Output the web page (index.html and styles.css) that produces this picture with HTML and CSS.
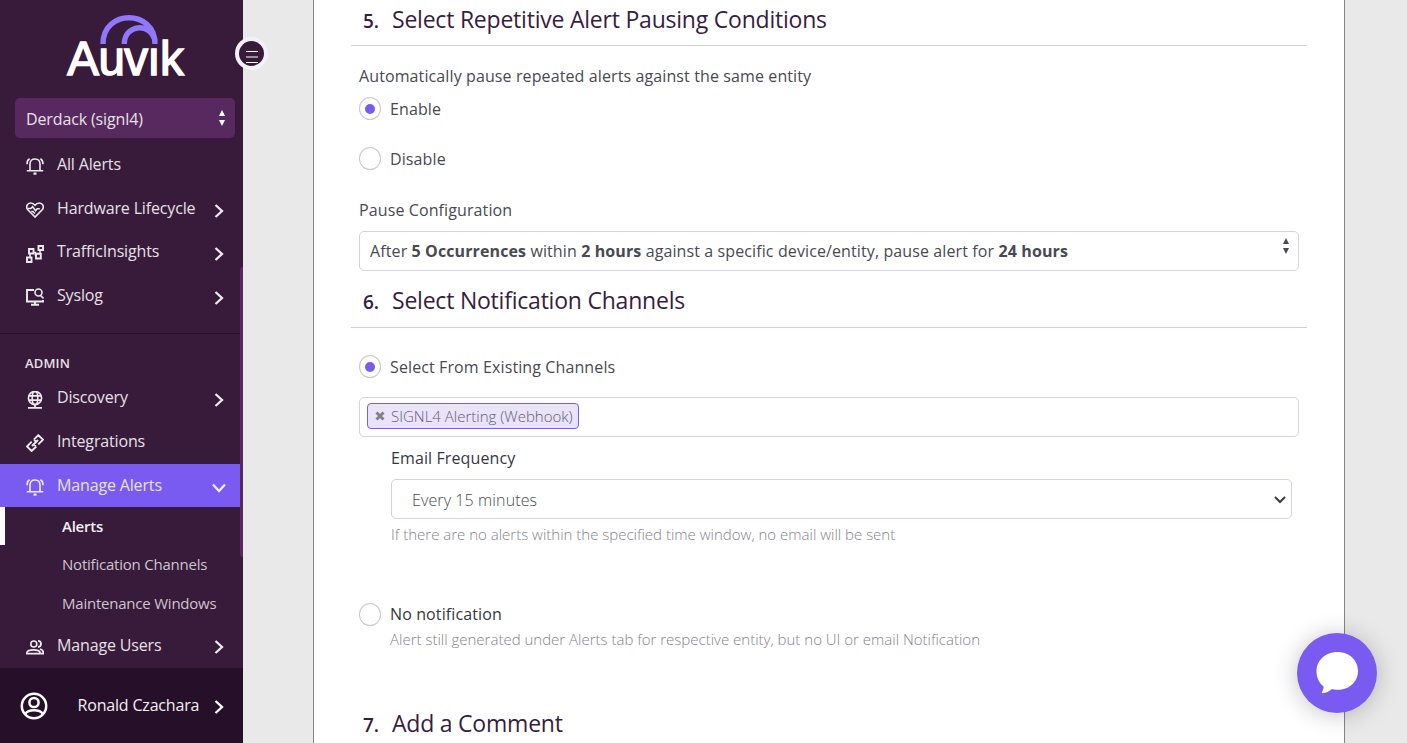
FILE: index.html
```
<!DOCTYPE html>
<html lang="en">
<head>
<meta charset="utf-8">
<title>Auvik - Alerts</title>
<link rel="stylesheet" href="styles.css">
</head>
<body>
<svg class="sprite" aria-hidden="true">
  <symbol id="bell" viewBox="0 0 18 18"><path d="M.8 13.700h16.400M4 13.500V7.200C4 3.500 6 2 9 2s5 1.500 5 5.200v6.300" /><path d="M1 7.200C1 4.600 1.500 2.800 3.600 1.700M17 7.200c0-2.600-.5-4.400-2.600-5.500" /><path d="M7.500 16.600h3" stroke-width="2.200"/></symbol>
  <symbol id="heart" viewBox="0 0 18 18"><path d="M9 16 1.600 8.500C-.4 5.700 1.300 2 4.600 2 6.600 2 8 3 9 4.300 10 3 11.400 2 13.400 2c3.300 0 5 3.700 3 6.500z"/><path d="M2 7.500h2.800l1.800-1.800 3 4 1.500-1.900h2.700M5.300 10.500h1.600l2 2"/></symbol>
  <symbol id="nodes" viewBox="0 0 18 18"><path d="M1 12.500h4.500V17H1zM3 4h4.500v4.500H3zM10 8.800h4.800v4.700H10zM12.500 1H17v4h-4.500z" stroke-width="1.900"/><path d="M4 8.500v4M7.500 7.500h2v3.500M14 8.800V5"/></symbol>
  <symbol id="monitor" viewBox="0 0 18 18"><path d="M8 2H1v11.500h16V12M9 13.500V16M5 16.800h8" stroke-width="1.900"/><circle cx="12.500" cy="4.500" r="3.500"/><path d="m14.500 7.500 3 3"/></symbol>
  <symbol id="globe" viewBox="0 0 18 18"><circle cx="9" cy="7" r="6.600"/><ellipse cx="9" cy="7" rx="2.800" ry="6.600"/><path d="M3 4.800h12M3 9.200h12M9 13.500V16M2 16.800h14" stroke-width="1.800"/></symbol>
  <symbol id="link" viewBox="0 0 18 18"><path d="m7.800 5.700 4.500-4.500L17 5.600l-4.700 4.800M10.300 12.500l-4.700 4.500L1 12.500l4.700-4.800M6 12l6-6M8 6l2 1.500M10 12 8 10.500" stroke-width="1.900"/></symbol>
  <symbol id="users" viewBox="0 0 18 18"><circle cx="7.800" cy="5" r="3"/><path d="M1 14.700v-1.500c1-3.200 12-3.200 13 0v1.500zM12 1.800c4 0 4 6 0 6.200M14 10c2 .7 3.200 1.600 3.200 3v1.700H15" stroke-width="1.800"/></symbol>
  <symbol id="chev" viewBox="0 0 12 16"><path d="m2.500 2 6.500 6-6.500 6" stroke-width="2.300"/></symbol>
</svg>
<div class="app">
  <aside class="sidebar">
    <svg class="logo" viewBox="0 0 124 68" role="img" aria-label="Auvik">
      <path d="M39 34C39 -1.100 91 -1.100 91 34" />
      <path d="M60.300 34C60.300 14 87 12 91 31"/>
      <text x="3.300" y="65.200">Auvık</text>
    </svg>
    <div class="tenant"><span>Derdack (signl4)</span><i class="updown"></i></div>
    <nav class="nav">
      <a class="item"><svg class="ic"><use href="#bell"/></svg><span>All Alerts</span></a>
      <a class="item"><svg class="ic"><use href="#heart"/></svg><span>Hardware Lifecycle</span><svg class="chev"><use href="#chev"/></svg></a>
      <a class="item"><svg class="ic"><use href="#nodes"/></svg><span>TrafficInsights</span><svg class="chev"><use href="#chev"/></svg></a>
      <a class="item"><svg class="ic"><use href="#monitor"/></svg><span>Syslog</span><svg class="chev"><use href="#chev"/></svg></a>
    </nav>
    <div class="group">ADMIN</div>
    <nav class="nav">
      <a class="item"><svg class="ic"><use href="#globe"/></svg><span>Discovery</span><svg class="chev"><use href="#chev"/></svg></a>
      <a class="item"><svg class="ic"><use href="#link"/></svg><span>Integrations</span></a>
      <a class="item active"><svg class="ic"><use href="#bell"/></svg><span>Manage Alerts</span><svg class="chev down"><use href="#chev"/></svg></a>
      <a class="sub current">Alerts</a>
      <a class="sub">Notification Channels</a>
      <a class="sub">Maintenance Windows</a>
      <a class="item last"><svg class="ic"><use href="#users"/></svg><span>Manage Users</span><svg class="chev"><use href="#chev"/></svg></a>
    </nav>
    <div class="account">
      <svg class="avatar" viewBox="0 0 28 28"><circle cx="14" cy="14" r="12.200"/><circle cx="14" cy="10.500" r="4.600"/><path d="M5 22c3.500-5 14.500-5 18 0"/></svg>
      <span>Ronald Czachara</span><svg class="chev"><use href="#chev"/></svg>
    </div>
    <i class="scroll"></i>
    <button class="toggle" aria-label="Menu"><svg viewBox="0 0 14 14"><path d="M1 1.500h12M1 7h12M1 12.500h12"/></svg></button>
  </aside>
  <main class="card">
    <h2 class="h5"><b>5.</b><span>Select Repetitive Alert Pausing Conditions</span></h2>
    <div class="fields pause">
      <p class="label">Automatically pause repeated alerts against the same entity</p>
      <label class="radio on"><i></i><span>Enable</span></label>
      <label class="radio"><i></i><span>Disable</span></label>
      <p class="label">Pause Configuration</p>
      <div class="box config"><span>After <b>5 Occurrences</b> within <b>2 hours</b> against a specific device/entity, pause alert for <b>24 hours</b></span><i class="updown"></i></div>
    </div>
    <h2 class="h6"><b>6.</b><span>Select Notification Channels</span></h2>
    <div class="fields channels">
      <label class="radio on"><i></i><span>Select From Existing Channels</span></label>
      <div class="box tags"><span class="tag"><svg viewBox="0 0 10 10"><path d="m1.500 1.500 7 7M8.500 1.500l-7 7"/></svg><span>SIGNL4 Alerting (Webhook)</span></span></div>
      <div class="email">
        <p class="label dark">Email Frequency</p>
        <div class="box freq"><span>Every 15 minutes</span><svg viewBox="0 0 12 8"><path d="m1 1 5 5 5-5"/></svg></div>
        <p class="hint h-a">If there are no alerts within the specified time window, no email will be sent</p>
      </div>
      <label class="radio none"><i></i><span class="dark">No notification</span></label>
      <p class="hint h-b">Alert still generated under Alerts tab for respective entity, but no UI or email Notification</p>
    </div>
    <h2 class="h7"><b>7.</b><span>Add a Comment</span></h2>
  </main>
  <button class="chat" aria-label="Chat"><svg viewBox="0 0 44 44"><path d="M22.500 1C34.500 1 43 9.500 43 20c0 11-9 18.800-20.500 18.800-2.500 0-4-.5-6-.5-2.500 2-5 4-9.500 3.900C6.500 40.500 9 38.500 8.600 35.500 4 32 1.500 26.500 1.500 20 1.500 9.500 10.500 1 22.500 1z"/></svg></button>
</div>
</body>
</html>
```
FILE: styles.css
```
* { box-sizing: border-box; }
body { margin: 0; background: #e9e9e9; font-family: "Open Sans", "Noto Sans", sans-serif; font-size: 16px; color: #484a52; overflow: hidden; }
p, h2 { margin: 0; }
button { border: 0; padding: 0; }
.sprite { position: absolute; width: 0; height: 0; }
.app { display: flex; height: 743px; overflow: hidden; }

.sidebar { position: relative; width: 243px; height: 743px; background: #381a3a; color: #e6e1e6; display: flex; flex-direction: column; flex: none; }
.logo { width: 124px; height: 68px; margin: 10px 0 0 64px; flex: none; overflow: visible; }
.logo path { fill: none; stroke: #8f78fb; stroke-width: 5.400; }
.logo text { font: 400 47.500px "Liberation Sans", sans-serif; fill: #fff; stroke: #fff; stroke-width: 1.500; letter-spacing: -.6px; }
.tenant { width: 220px; height: 40px; margin: 20px 0 5px 15px; flex: none; padding: 2px 10px 0 11px; border-radius: 5px; background: #58295f; display: flex; align-items: center; justify-content: space-between; letter-spacing: -0.13px; }
.updown { width: 6px; height: 16px; display: flex; flex-direction: column; justify-content: space-between; }
.updown::before, .updown::after { content: ""; border: 3px solid transparent; border-top: 0; border-bottom: 6px solid currentColor; }
.updown::after { transform: rotate(180deg); }
.tenant .updown { margin-bottom: 3px; color: #fff; }
.nav { display: flex; flex-direction: column; }
.item { width: 240px; height: 43.700px; display: flex; align-items: center; padding: 0 15px 2px 26px; letter-spacing: -0.15px; flex: none; }
.ic { width: 18px; height: 18px; margin: 5px 13px 0 0; flex: none; fill: none; stroke: #eeebee; stroke-width: 1.600; }
.chev { width: 12px; height: 16px; margin: 6px 0 0 auto; fill: none; stroke: #eeebee; flex: none; }
.down { transform: rotate(90deg); }
.active { background: #7a5bf1; height: 43px; padding-bottom: 1px; }
.group { height: 43.600px; width: 240px; margin-top: 15px; border-top: 1px solid #27102a; padding: 20px 0 0 25px; font-size: 13px; line-height: 18px; font-weight: 600; letter-spacing: .15px; flex: none; }
.sub { width: 240px; height: 38.600px; line-height: 39px; padding-left: 62px; font-size: 15px; letter-spacing: -0.22px; flex: none; color: #cdc5ce; }
.current { font-weight: 600; border-left: 5px solid #fff; padding-left: 57px; letter-spacing: -0.25px; color: #f4f1f4; }
.last { padding-top: 2px; padding-bottom: 0; }
.last .chev { margin-top: 4px; }
.account { margin-top: auto; height: 75px; background: #260f28; color: #f2eff2; padding: 0 15px 0 20px; display: flex; align-items: center; width: 243px; flex: none; letter-spacing: -0.18px; }
.account span { margin-bottom: 2px; }
.account .chev { margin: 2px 3px 0 auto; stroke: #fff; }
.avatar { width: 28px; height: 28px; margin-right: 29.500px; fill: none; stroke: #fff; stroke-width: 2.500; }
.scroll { position: absolute; right: 0; top: 267px; width: 3px; height: 290px; background: #58295f; border-radius: 3px 0 0 3px; }
.toggle { position: absolute; left: 235px; top: 37px; width: 33px; height: 33px; border: 4px solid #f1f1f8; border-radius: 50%; background: #381a3a; display: flex; justify-content: center; }
.toggle svg { width: 14px; height: 14px; margin-top: 9px; fill: none; stroke: #fff; stroke-width: 1.200; }

.card { width: 1032px; height: 743px; margin-left: 70px; padding: 0 37px; background: #fff; border: solid #85838d; border-width: 0 1px; display: flex; flex-direction: column; flex: none; letter-spacing: .11px; }
h2 { display: flex; align-items: baseline; padding-left: 12px; border-bottom: 1px solid #d2d0e0; color: #371d3f; font-size: 23px; line-height: 32px; font-weight: 400; letter-spacing: -.22px; flex: none; }
h2 b { font-size: 19px; font-weight: 600; width: 29px; letter-spacing: 0; }
.h5 { height: 46px; padding-top: 3px; }
.h6 { height: 57px; padding-top: 13px; }
.h7 { height: 70px; margin-top: 58px; }
.fields { display: flex; flex-direction: column; padding: 0 8px; }
.label { line-height: 24px; }
.pause .label { margin-top: 18px; }
.radio { display: flex; align-items: center; height: 24px; flex: none; }
.radio i { width: 22px; height: 23px; border: 1px solid #c9c9cd; border-radius: 50%; margin: 0 9px 1px 0; display: flex; align-items: center; justify-content: center; }
.none i { margin-bottom: 0; }
.on i::before { content: ""; width: 10px; height: 10px; border-radius: 50%; background: #7a5bf1; margin-top: 1px; }
.pause .radio { margin: 9px 0 17px; }
.pause .radio + .radio { margin-bottom: 9px; }
.box { width: 940px; height: 40px; border: 1px solid #d4d2e3; border-radius: 5px; display: flex; align-items: center; justify-content: space-between; flex: none; }
.config { margin-top: 9px; padding: 0 9px 0 10px; }
.config .updown { margin-bottom: 10px; }
.config b { font-weight: 700; }
.channels > .radio { margin-top: 27px; }
.tags { margin-top: 18px; padding: 0 0 2px 7px; }
.tag { height: 26px; width: 212px; border: 1px solid #7a5bf1; border-radius: 4px; background: #e9e3fb; display: flex; align-items: center; padding-left: 7px; font-size: 15px; font-weight: 300; color: #62616b; letter-spacing: 0; }
.tag svg { width: 10px; height: 10px; margin-right: 6px; stroke: #82808a; stroke-width: 3; }
.email { margin: 9px 0 0 32px; }
.dark { color: #35373f; }
.freq { width: 901px; margin-top: 9px; padding: 0 5px 0 20px; font-weight: 300; }
.freq span { margin-top: 2px; }
.freq svg { width: 12px; height: 8px; margin-top: 1px; fill: none; stroke: #3c3d44; stroke-width: 2; }
.hint { font-size: 15px; line-height: 20px; font-weight: 300; color: #85848c; letter-spacing: 0; }
.h-a { margin: 5px 0 1px; }
.channels > .email + .radio { margin-top: 57px; }
.h-b { margin: 3px 0 0 31px; }
.chat { position: absolute; left: 1297px; top: 633px; width: 80px; height: 80px; border-radius: 50%; background: #7a5bf1; display: flex; align-items: center; justify-content: center; box-shadow: 0 2px 24px rgba(0,0,0,.23); }
.chat svg { width: 44px; height: 44px; fill: #fff; }
```
